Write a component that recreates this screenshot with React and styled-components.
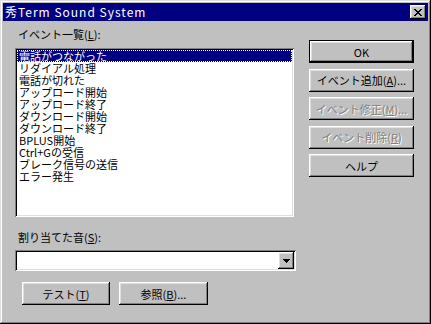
import React from 'react'
import styled, { createGlobalStyle } from 'styled-components'

const GlobalStyle = createGlobalStyle`
  html, body {
    margin: 0;
    padding: 0;
    background: #c0c0c0;
  }
  body {
    font-family: "Noto Sans CJK JP", "Noto Sans", sans-serif;
    font-size: 11px;
  }
`

const RAISED = `
  box-shadow: inset -1px -1px #000, inset 1px 1px #fff,
    inset -2px -2px #808080, inset 2px 2px #dfdfdf;
`

const SUNKEN = `
  box-shadow: inset 1px 1px #808080, inset -1px -1px #fff,
    inset 2px 2px #000, inset -2px -2px #dfdfdf;
`

const Window = styled.div`
  box-sizing: border-box;
  width: 431px;
  height: 324px;
  padding: 3px;
  background: #c0c0c0;
  box-shadow: inset -1px -1px #000, inset 1px 1px #dfdfdf,
    inset -2px -2px #808080, inset 2px 2px #fff;
  display: flex;
  flex-direction: column;
`

const TitleBar = styled.div`
  height: 18px;
  background: #000080;
  color: #fff;
  display: flex;
  align-items: center;
  justify-content: space-between;
  padding: 0 2px;
`

const TitleText = styled.span`
  font-size: 12px;
  line-height: 18px;
  letter-spacing: 1px;
`

const CloseButton = styled.div`
  width: 16px;
  height: 14px;
  background: #c0c0c0;
  ${RAISED}
  display: flex;
  align-items: center;
  justify-content: center;
`

const Body = styled.div`
  flex: 1;
  display: flex;
  padding-left: 12px;
`

const LeftColumn = styled.div`
  width: 281px;
  padding-top: 6px;
  display: flex;
  flex-direction: column;
`

const RightColumn = styled.div`
  margin-left: 13px;
  width: 105px;
  padding-top: 19px;
  display: flex;
  flex-direction: column;
  gap: 5.6px;
`

const Label = styled.div`
  height: 14px;
  line-height: 14px;
  padding-left: 3px;
  margin-top: ${p => p.$top || 0}px;
  color: #000;
  white-space: nowrap;
`

const ListBox = styled.ul`
  box-sizing: border-box;
  list-style: none;
  margin: 7px 0 0;
  padding: 2px;
  width: 279px;
  height: 169px;
  background: #fff;
  ${SUNKEN}
`

const ListItem = styled.li`
  height: 12px;
  line-height: 12px;
  padding-left: 2px;
  white-space: nowrap;
  color: ${p => (p.$selected ? '#fff' : '#000')};
  background: ${p => (p.$selected ? '#000080' : 'transparent')};
  outline: ${p => (p.$selected ? '1px dotted #ffffc0' : 'none')};
  outline-offset: -1px;
`

const ComboBox = styled.div`
  box-sizing: border-box;
  margin-top: 6px;
  width: 281px;
  height: 21px;
  padding: 2px;
  background: #fff;
  ${SUNKEN}
  display: flex;
  justify-content: flex-end;
`

const DropButton = styled.div`
  width: 16px;
  height: 17px;
  background: #c0c0c0;
  ${RAISED}
  display: flex;
  align-items: center;
  justify-content: center;
`

const ButtonRow = styled.div`
  margin-top: 11px;
  padding-left: 7px;
  display: flex;
  gap: 9px;
`

const Button = styled.div`
  box-sizing: border-box;
  width: ${p => p.$width || 105}px;
  height: 23px;
  background: #c0c0c0;
  display: flex;
  align-items: center;
  justify-content: center;
  white-space: nowrap;
  color: ${p => (p.$disabled ? '#808080' : '#000')};
  text-shadow: ${p => (p.$disabled ? '1px 1px 0 #fff' : 'none')};
  ${p =>
    p.$default
      ? `box-shadow: inset 0 0 0 1px #000, inset -2px -2px #000, inset 2px 2px #fff,
          inset -3px -3px #808080, inset 3px 3px #dfdfdf;`
      : RAISED}
`

const events = [
  '電話がつながった',
  'リダイアル処理',
  '電話が切れた',
  'アップロード開始',
  'アップロード終了',
  'ダウンロード開始',
  'ダウンロード終了',
  'BPLUS開始',
  'Ctrl+Gの受信',
  'ブレーク信号の送信',
  'エラー発生',
]

const App = () => {
  return (
    <>
      <GlobalStyle />
      <Window>
        <TitleBar>
          <TitleText>秀Term Sound System</TitleText>
          <CloseButton>
            <svg width="8" height="7" viewBox="0 0 8 7" shapeRendering="crispEdges">
              <path
                fill="#000"
                d="M0 0h2v1h-2zM6 0h2v1h-2zM1 1h2v1h-2zM5 1h2v1h-2zM2 2h4v1h-4zM3 3h2v1h-2zM2 4h4v1h-4zM1 5h2v1h-2zM5 5h2v1h-2zM0 6h2v1h-2zM6 6h2v1h-2z"
              />
            </svg>
          </CloseButton>
        </TitleBar>

        <Body>
          <LeftColumn>
            <Label>イベント一覧(<u>L</u>):</Label>
            <ListBox>
              {events.map((e, i) => (
                <ListItem key={e} $selected={i === 0}>{e}</ListItem>
              ))}
            </ListBox>

            <Label $top={13}>割り当てた音(<u>S</u>):</Label>
            <ComboBox>
              <DropButton>
                <svg width="7" height="4" viewBox="0 0 7 4" shapeRendering="crispEdges">
                  <path fill="#000" d="M0 0h7v1h-7zM1 1h5v1h-5zM2 2h3v1h-3zM3 3h1v1h-1z" />
                </svg>
              </DropButton>
            </ComboBox>

            <ButtonRow>
              <Button $width={88}>テスト(<u>T</u>)</Button>
              <Button $width={89}>参照(<u>B</u>)...</Button>
            </ButtonRow>
          </LeftColumn>

          <RightColumn>
            <Button $default>OK</Button>
            <Button>イベント追加(<u>A</u>)...</Button>
            <Button $disabled>イベント修正(<u>M</u>)...</Button>
            <Button $disabled>イベント削除(<u>R</u>)</Button>
            <Button>ヘルプ</Button>
          </RightColumn>
        </Body>
      </Window>
    </>
  )
}

export default App
